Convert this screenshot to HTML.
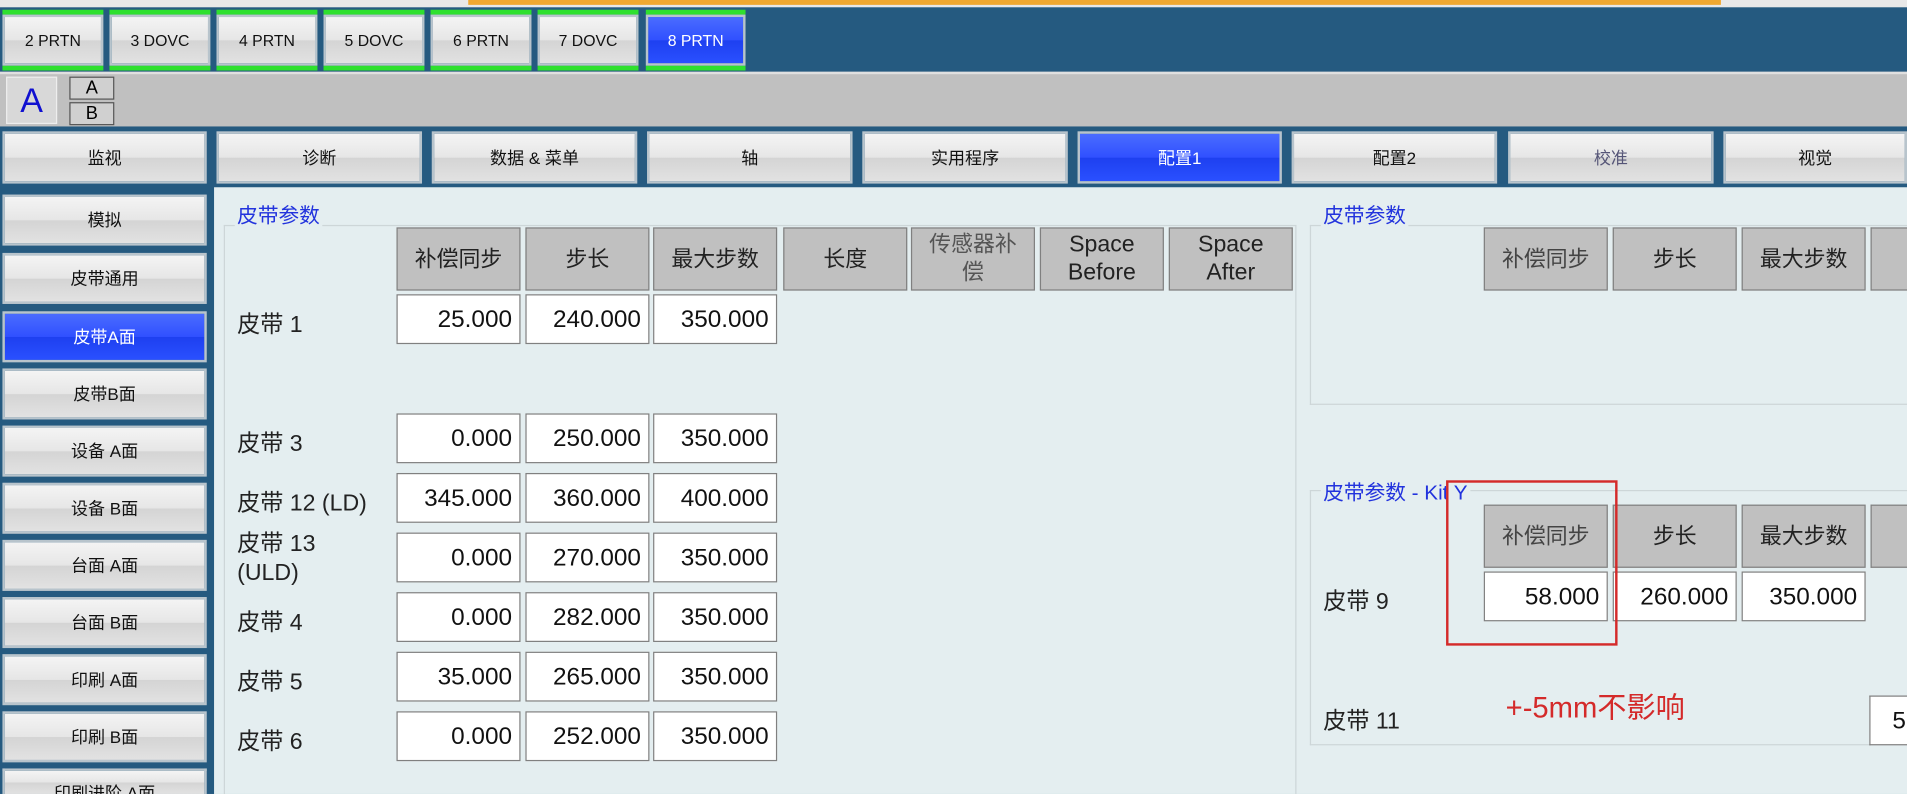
<!DOCTYPE html>
<html><head><meta charset="utf-8"><style>
html,body{margin:0;width:1907px;height:794px;overflow:hidden;background:#e4eef0;font-family:"Liberation Sans","Noto Sans CJK SC",sans-serif}
#w{position:absolute;left:0;top:0;width:1568px;height:653px;overflow:hidden;transform:scale(1.2162,1.2159);transform-origin:0 0;background:#255a80}
.a{position:absolute;box-sizing:border-box}
.b{position:absolute;box-sizing:border-box;background:linear-gradient(#f4f4f4,#e6e6e6 50%,#d4d4d4 51%,#e2e2e2);border:2px solid #b8c4cc;display:flex;align-items:center;justify-content:center;font-size:14px;color:#111}
.bl{background:linear-gradient(#4a6cff,#3050ff 50%,#1e40f0 51%,#2a50ff);color:#fff}
.g{position:absolute;box-sizing:border-box;background:#c0c0c0;border:1px solid #808080;display:flex;align-items:center;justify-content:center;text-align:center;font-size:18px;color:#222;line-height:23px;height:52px;width:102px;padding:0 6px}
.i{position:absolute;box-sizing:border-box;background:#fff;border:1px solid #808080;font-size:20px;color:#111;text-align:right;padding-right:6px;line-height:40px;height:41px;width:102px}
.l{position:absolute;font-size:19px;color:#222}
.t{position:absolute;font-size:17px;color:#2233dd;background:#e4eef0;padding:0 2px}
.gr{position:absolute;height:4px;background:#2ee02e}
</style></head><body><div id="w">
<div class="a" style="left:0;top:0;width:1568px;height:6px;background:#e8e8e8"></div>
<div class="a" style="left:385px;top:0;width:1030px;height:4px;background:#f0a830"></div>
<div class="gr" style="left:2px;top:8px;width:83px"></div><div class="gr" style="left:2px;top:54px;width:83px"></div><div class="b" style="left:2px;top:12px;width:83px;height:42px;font-size:13px">2 PRTN</div>
<div class="gr" style="left:90px;top:8px;width:83px"></div><div class="gr" style="left:90px;top:54px;width:83px"></div><div class="b" style="left:90px;top:12px;width:83px;height:42px;font-size:13px">3 DOVC</div>
<div class="gr" style="left:178px;top:8px;width:83px"></div><div class="gr" style="left:178px;top:54px;width:83px"></div><div class="b" style="left:178px;top:12px;width:83px;height:42px;font-size:13px">4 PRTN</div>
<div class="gr" style="left:266px;top:8px;width:83px"></div><div class="gr" style="left:266px;top:54px;width:83px"></div><div class="b" style="left:266px;top:12px;width:83px;height:42px;font-size:13px">5 DOVC</div>
<div class="gr" style="left:354px;top:8px;width:83px"></div><div class="gr" style="left:354px;top:54px;width:83px"></div><div class="b" style="left:354px;top:12px;width:83px;height:42px;font-size:13px">6 PRTN</div>
<div class="gr" style="left:442px;top:8px;width:83px"></div><div class="gr" style="left:442px;top:54px;width:83px"></div><div class="b" style="left:442px;top:12px;width:83px;height:42px;font-size:13px">7 DOVC</div>
<div class="gr" style="left:531px;top:8px;width:82px"></div><div class="gr" style="left:531px;top:54px;width:82px"></div><div class="b bl" style="left:531px;top:12px;width:82px;height:42px;font-size:13px">8 PRTN</div>
<div class="a" style="left:0;top:59px;width:1568px;height:45px;background:#c0c0c0;border-top:2px solid #e0e0e0"></div>
<div class="a" style="left:5px;top:63px;width:42px;height:39px;background:#d8d8d8;border:1px solid #eee;color:#1010d0;font-size:28px;text-align:center;line-height:38px">A</div>
<div class="a" style="left:57px;top:63px;width:37px;height:19px;border:1px solid #555;background:#d0d0d0;font-size:15px;text-align:center;line-height:17px">A</div>
<div class="a" style="left:57px;top:84px;width:37px;height:19px;border:1px solid #555;background:#d0d0d0;font-size:15px;text-align:center;line-height:17px">B</div>
<div class="b" style="left:2px;top:108px;width:168px;height:43px">监视</div>
<div class="b" style="left:178px;top:108px;width:169px;height:43px">诊断</div>
<div class="b" style="left:355px;top:108px;width:169px;height:43px">数据 &amp; 菜单</div>
<div class="b" style="left:532px;top:108px;width:169px;height:43px">轴</div>
<div class="b" style="left:709px;top:108px;width:169px;height:43px">实用程序</div>
<div class="b bl" style="left:886px;top:108px;width:168px;height:43px">配置1</div>
<div class="b" style="left:1062px;top:108px;width:169px;height:43px">配置2</div>
<div class="b" style="left:1240px;top:108px;width:169px;height:43px;color:#557">校准</div>
<div class="b" style="left:1417px;top:108px;width:151px;height:43px">视觉</div>
<div class="b" style="left:2px;top:160px;width:168px;height:42px">模拟</div>
<div class="b" style="left:2px;top:208px;width:168px;height:42px">皮带通用</div>
<div class="b bl" style="left:2px;top:256px;width:168px;height:42px">皮带A面</div>
<div class="b" style="left:2px;top:303px;width:168px;height:42px">皮带B面</div>
<div class="b" style="left:2px;top:350px;width:168px;height:42px">设备 A面</div>
<div class="b" style="left:2px;top:397px;width:168px;height:42px">设备 B面</div>
<div class="b" style="left:2px;top:444px;width:168px;height:42px">台面 A面</div>
<div class="b" style="left:2px;top:491px;width:168px;height:42px">台面 B面</div>
<div class="b" style="left:2px;top:538px;width:168px;height:42px">印刷 A面</div>
<div class="b" style="left:2px;top:585px;width:168px;height:42px">印刷 B面</div>
<div class="b" style="left:2px;top:632px;width:168px;height:21px;align-items:flex-start;padding-top:8px;overflow:hidden;border-bottom:none">印刷进阶 A面</div>
<div class="a" style="left:176px;top:154px;width:1392px;height:499px;background:#e4eef0"></div>
<div class="a" style="left:184px;top:185px;width:882px;height:468px;border:1px solid #cdd6d8;border-bottom:none"></div>
<div class="t" style="left:193px;top:163px">皮带参数</div>
<div class="g" style="left:326px;top:187px">补偿同步</div>
<div class="g" style="left:432px;top:187px">步长</div>
<div class="g" style="left:537px;top:187px">最大步数</div>
<div class="g" style="left:644px;top:187px">长度</div>
<div class="g" style="left:749px;top:187px;color:#555">传感器补偿</div>
<div class="g" style="left:855px;top:187px;font-size:19px">Space Before</div>
<div class="g" style="left:961px;top:187px;font-size:19px;padding:0 14px">Space After</div>
<div class="l" style="left:195px;top:252px">皮带 1</div>
<div class="i" style="left:326px;top:242px">25.000</div><div class="i" style="left:432px;top:242px">240.000</div><div class="i" style="left:537px;top:242px">350.000</div>
<div class="l" style="left:195px;top:350px">皮带 3</div>
<div class="i" style="left:326px;top:340px">0.000</div><div class="i" style="left:432px;top:340px">250.000</div><div class="i" style="left:537px;top:340px">350.000</div>
<div class="l" style="left:195px;top:399px">皮带 12 (LD)</div>
<div class="i" style="left:326px;top:389px">345.000</div><div class="i" style="left:432px;top:389px">360.000</div><div class="i" style="left:537px;top:389px">400.000</div>
<div class="l" style="left:195px;top:436px;line-height:24px">皮带 13<br>(ULD)</div>
<div class="i" style="left:326px;top:438px">0.000</div><div class="i" style="left:432px;top:438px">270.000</div><div class="i" style="left:537px;top:438px">350.000</div>
<div class="l" style="left:195px;top:497px">皮带 4</div>
<div class="i" style="left:326px;top:487px">0.000</div><div class="i" style="left:432px;top:487px">282.000</div><div class="i" style="left:537px;top:487px">350.000</div>
<div class="l" style="left:195px;top:546px">皮带 5</div>
<div class="i" style="left:326px;top:536px">35.000</div><div class="i" style="left:432px;top:536px">265.000</div><div class="i" style="left:537px;top:536px">350.000</div>
<div class="l" style="left:195px;top:595px">皮带 6</div>
<div class="i" style="left:326px;top:585px">0.000</div><div class="i" style="left:432px;top:585px">252.000</div><div class="i" style="left:537px;top:585px">350.000</div>
<div class="a" style="left:1077px;top:185px;width:491px;height:148px;border:1px solid #cdd6d8;border-right:none"></div>
<div class="t" style="left:1086px;top:163px">皮带参数</div>
<div class="g" style="left:1220px;top:187px;color:#444">补偿同步</div>
<div class="g" style="left:1326px;top:187px">步长</div>
<div class="g" style="left:1432px;top:187px">最大步数</div>
<div class="g" style="left:1538px;top:187px;width:30px;border-right:none"></div>
<div class="a" style="left:1077px;top:403px;width:491px;height:210px;border:1px solid #cdd6d8;border-right:none"></div>
<div class="t" style="left:1086px;top:391px">皮带参数 - Kit Y</div>
<div class="g" style="left:1220px;top:415px;color:#444">补偿同步</div>
<div class="g" style="left:1326px;top:415px">步长</div>
<div class="g" style="left:1432px;top:415px">最大步数</div>
<div class="g" style="left:1538px;top:415px;width:30px;border-right:none"></div>
<div class="l" style="left:1088px;top:480px">皮带 9</div>
<div class="i" style="left:1220px;top:470px">58.000</div><div class="i" style="left:1326px;top:470px">260.000</div><div class="i" style="left:1432px;top:470px">350.000</div>
<div class="l" style="left:1088px;top:578px">皮带 11</div>
<div class="i" style="left:1537px;top:572px;width:31px;text-align:left;padding-left:18px;border-right:none;overflow:hidden">5</div>
<div class="a" style="left:1189px;top:395px;width:141px;height:136px;border:2px solid #d42a2a"></div>
<div class="a" style="left:1238px;top:562px;font-size:24px;color:#d42a2a">+-5mm不影响</div>
</div></body></html>
